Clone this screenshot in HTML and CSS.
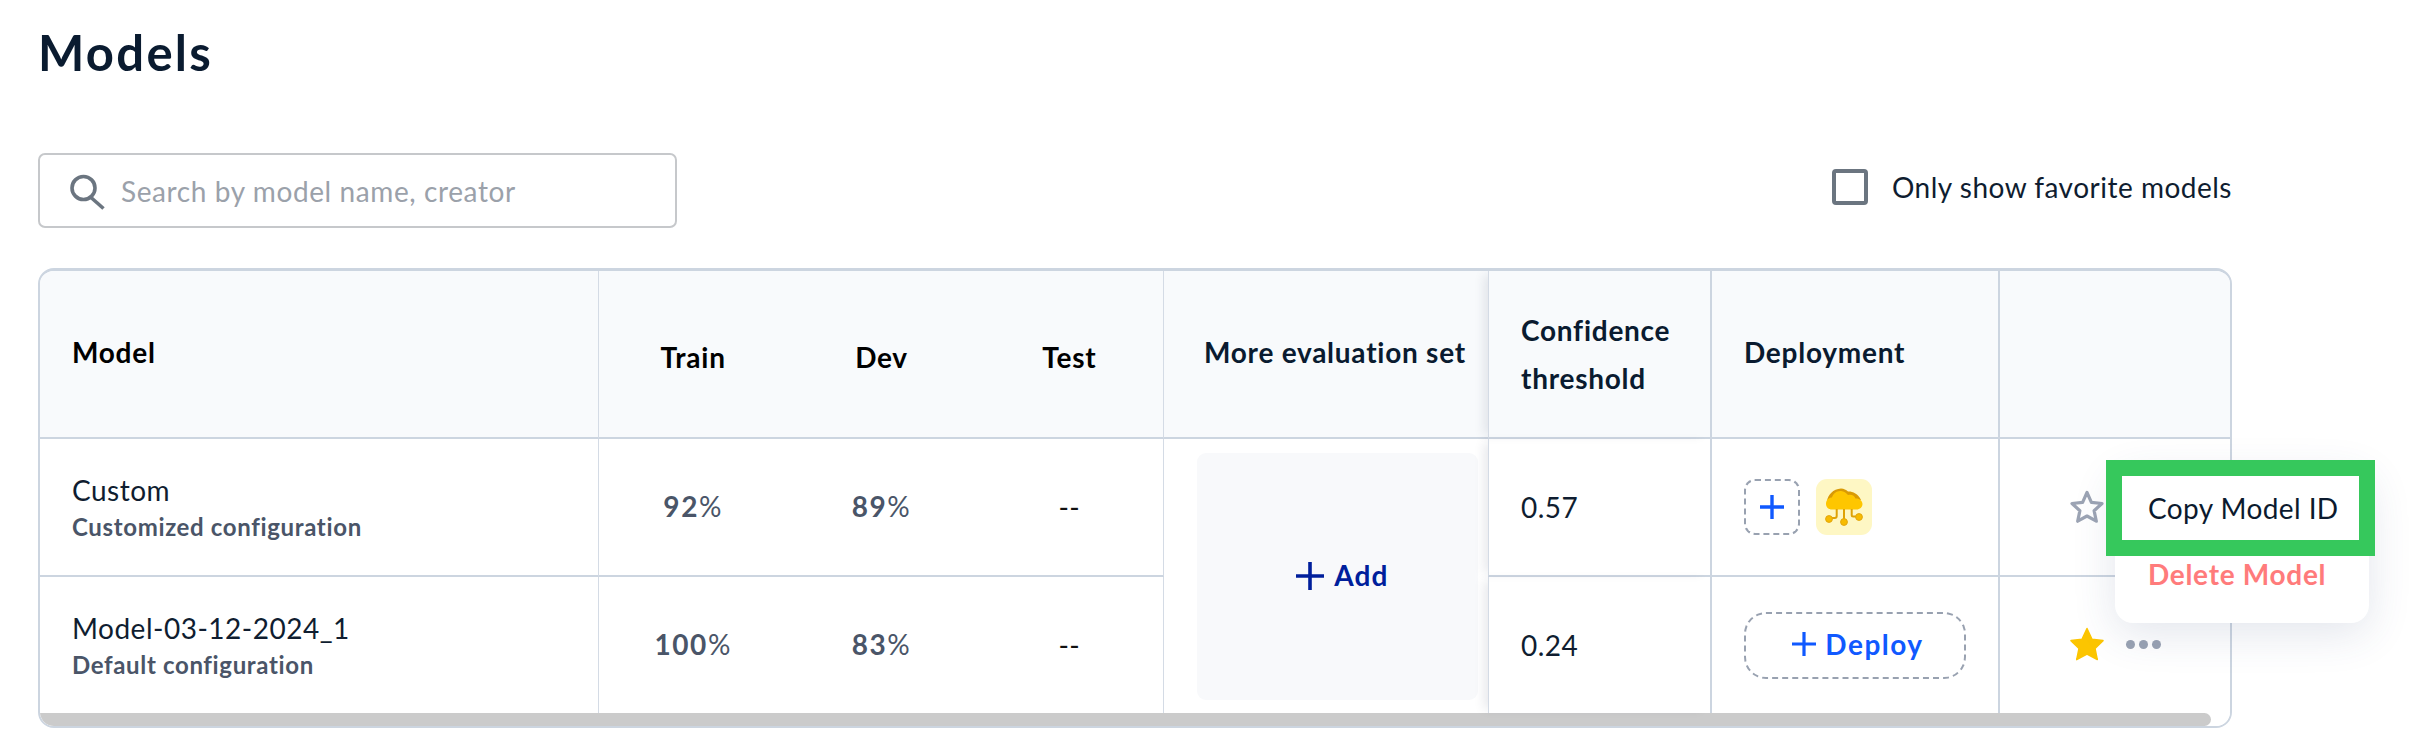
FILE: index.html
```html
<!DOCTYPE html>
<html lang="en">
<head>
<meta charset="utf-8">
<title>Models</title>
<link rel="stylesheet" href="styles.css">
</head>
<body>
<main class="page">
  <h1 class="title">Models</h1>
  <div class="toolbar">
    <label class="search">
      <svg class="search-icon" viewBox="0 0 36 36" width="36" height="36"><circle cx="14.5" cy="14" r="11.5" fill="none" stroke="#6b7580" stroke-width="3.6"/><path d="M22 23.5 34.5 34.5" fill="none" stroke="#6b7580" stroke-width="3.6"/></svg>
      <input class="search-input" type="text" placeholder="Search by model name, creator">
    </label>
    <label class="filter"><span class="checkbox"></span><span>Only show favorite models</span></label>
  </div>
  <div class="table-area">
    <div class="table-frame">
      <table class="models">
        <colgroup>
          <col class="c-model"><col class="c-num"><col class="c-num"><col class="c-num"><col class="c-more"><col class="c-conf"><col class="c-dep"><col class="c-act">
        </colgroup>
        <thead>
          <tr>
            <th class="lead line">Model</th>
            <th class="metric"><span>Train</span></th>
            <th class="metric"><span>Dev</span></th>
            <th class="metric line"><span>Test</span></th>
            <th class="more">More evaluation set</th>
            <th class="conf strong">Confidence threshold</th>
            <th class="dep strong">Deployment</th>
            <th></th>
          </tr>
        </thead>
        <tbody>
          <tr class="first">
            <td class="lead line"><div class="name">Custom</div><div class="config">Customized configuration</div></td>
            <td class="metric"><b>92</b>%</td>
            <td class="metric"><b>89</b>%</td>
            <td class="metric line dash">--</td>
            <td class="more-cell" rowspan="2"><button class="add" type="button"><svg viewBox="0 0 28 28" width="28" height="28"><path d="M14 0v28M0 14h28" stroke="#001f9c" stroke-width="3.6" fill="none"/></svg><span>Add</span></button></td>
            <td class="conf strong">0.57</td>
            <td class="dep strong">
              <div class="dep-row">
                <button class="plus-box" type="button"><svg viewBox="0 0 24 24" width="24" height="24"><path d="M12 0v24M0 12h24" stroke="#1059ff" stroke-width="3.4" fill="none"/></svg></button>
                <span class="cloud">
                  <svg viewBox="0 0 56 56" width="56" height="56">
                    <path d="M11 22C12 16 17 10 25 9.500c3 .2 5 1.300 7 3 4-.3 10 1.800 13 8.500Z" fill="#d99a05"/>
                    <path d="M16 30.500C12 30.500 9.800 27.500 10 24.500 10.200 21 13 18.500 16 18.500 17 14.500 21 11.500 25 12c3 .2 5 2 7 4 3.500-1 6.500 .5 7.500 3.500 4-.3 7 2.500 7 5.500 0 3-2.500 5.500-6 5.500Z" fill="#fec600"/>
                    <path d="M20.700 30v7c0 1.500-1 2-2 2H16M28 30v10M35.700 30v6c0 1 .5 1.500 1.500 1.500H40" fill="none" stroke="#dea207" stroke-width="2"/>
                    <circle cx="13" cy="40" r="3.400" fill="#f7bb00" stroke="#e3a60c"/><circle cx="28" cy="43" r="3.400" fill="#f7bb00" stroke="#e3a60c"/><circle cx="43" cy="38" r="3.400" fill="#f7bb00" stroke="#e3a60c"/>
                  </svg>
                </span>
              </div>
            </td>
            <td class="act">
              <svg class="star" viewBox="0 0 36 36" width="36" height="36"><path d="M18 3.500l4.400 9.800 10.600 1.200-7.900 7.200 2.200 10.500L18 27l-9.300 5.200 2.200-10.500L3 14.500l10.600-1.200Z" fill="none" stroke="#9ca4b4" stroke-width="3.200" stroke-linejoin="round"/></svg>
            </td>
          </tr>
          <tr class="second">
            <td class="lead line"><div class="name">Model-03-12-2024_1</div><div class="config">Default configuration</div></td>
            <td class="metric"><b>100</b>%</td>
            <td class="metric"><b>83</b>%</td>
            <td class="metric line dash">--</td>
            <td class="conf strong">0.24</td>
            <td class="dep strong">
              <button class="deploy" type="button"><svg viewBox="0 0 24 24" width="24" height="24"><path d="M12 0v24M0 12h24" stroke="#1059ff" stroke-width="3.2" fill="none"/></svg><span>Deploy</span></button>
            </td>
            <td class="act">
              <div class="act-row">
                <svg class="star" viewBox="0 0 36 36" width="36" height="36"><path d="M18 1.500l5 10.800 11 1.300-8 7.800 2.300 11.200L18 27l-10.300 5.600L10 21.400l-8-7.800 11-1.300Z" fill="#fcc500" stroke="#fcc500" stroke-width="1.500" stroke-linejoin="round"/></svg>
                <span class="dots"><i></i><i></i><i></i></span>
              </div>
            </td>
          </tr>
        </tbody>
      </table>
      <div class="scroll-track"><div class="scroll-thumb"></div></div>
    </div>
    <div class="menu">
      <div class="menu-item copy">Copy Model ID</div>
      <div class="menu-item delete">Delete Model</div>
    </div>
  </div>
</main>
</body>
</html>
```
FILE: styles.css
```css
* { box-sizing: border-box; }
html, body { margin: 0; background: #fff; }
body { font-family: "Lato", "Noto Sans", sans-serif; color: #0b1a2e; letter-spacing: .5px; }
.page { width: 2433px; height: 756px; padding: 20px 0 0 38px; overflow: hidden; }
.title { margin: 0; font-size: 49px; line-height: 64px; font-weight: 700; letter-spacing: 2.3px; color: #0a1b30; }
.toolbar { display: flex; justify-content: space-between; align-items: flex-start; width: 2194px; margin-top: 69px; }
.search { display: flex; align-items: center; gap: 16px; width: 639px; height: 75px; padding: 0 30px 0 29px; border: 2px solid #c6c8cb; border-radius: 7px; }
.search-icon { flex: none; margin-top: 2px; }
.search-input { flex: 1; min-width: 0; border: 0; outline: 0; padding: 0; font: 400 28px "Lato", sans-serif; letter-spacing: .6px; color: #0b1a2e; background: transparent; }
.search-input::placeholder { color: #9ba1aa; opacity: 1; }
.filter { display: flex; align-items: center; gap: 24px; margin-top: 16px; font-size: 28px; line-height: 36px; color: #0f1d30; }
.checkbox { width: 36px; height: 36px; border: 4px solid #6b7580; border-radius: 4px; }
.table-area { position: relative; width: 2194px; margin-top: 40px; }
.table-frame { width: 2194px; border: 2px solid #ccd5e0; border-top-width: 3px; border-radius: 16px; overflow: hidden; background: #fff; }
.models { width: 2190px; table-layout: fixed; border-collapse: separate; border-spacing: 0; }
.c-model { width: 559px; }
.c-num { width: 188.33px; }
.c-more { width: 324px; }
.c-conf { width: 224px; }
.c-dep { width: 288px; }
.c-act { width: 230px; }
th, td { padding: 0; text-align: left; vertical-align: middle; }
thead th { height: 168px; background: #f8fafc; border-bottom: 2px solid #ccd5e0; font-size: 28px; letter-spacing: .75px; line-height: 48px; font-weight: 700; color: #0a1b30; }
tbody td { font-size: 28px; color: #0f1d30; }
.first td { height: 138px; border-bottom: 2px solid #ccd5e0; }
.first .more-cell { border-bottom: 0; }
.second td { height: 136px; }
.line { border-right: 1px solid #d4dbe5; }
.lead { padding-left: 32px; }
thead .lead { padding-bottom: 4px; color: #000; }
thead .metric { text-align: center; padding-top: 6px; color: #000; }
.metric { text-align: center; color: #4a5568; }
tbody .metric { color: #4a5568; font-size: 28px; letter-spacing: 1.6px; padding-bottom: 2px; }
tbody .metric.dash { color: #111; letter-spacing: .5px; padding-bottom: 0; }
.metric b { font-weight: 700; }
.more { padding: 0 0 4px 40px; white-space: nowrap; }
.conf { position: relative; padding-left: 32px; box-shadow: -8px 0 10px -4px rgba(30, 40, 70, .10); border-left: 1px solid #d4dbe5; }
thead .conf { padding-right: 30px; }
.strong { border-right: 2px solid #ccd5e0; }
.dep { padding-left: 32px; }
thead .dep { padding-bottom: 4px; }
.name { font-size: 28px; line-height: 36px; color: #0f1d30; padding-top: 1px; }
.config { font-size: 24px; line-height: 34px; font-weight: 700; letter-spacing: .65px; color: #4a5568; margin-top: 2px; }
.more-cell { padding: 14px 10px 13px 33px; }
.add { display: flex; align-items: center; justify-content: center; gap: 10px; width: 100%; height: 247px; border: 0; border-radius: 9px; background: #f8f9fb; font: 700 28px "Lato", sans-serif; letter-spacing: 1.1px; color: #001f9c; padding: 0 0 4px 10px; }
.add svg { margin-top: 2px; }
.dep-row { display: flex; gap: 16px; }
.plus-box { display: flex; align-items: center; justify-content: center; width: 56px; height: 56px; padding: 0; border: 2px dashed #98a1b0; border-radius: 11px; background: #fff; }
.cloud { display: block; width: 56px; height: 56px; border-radius: 11px; background: #fef7c4; }
.cloud svg { display: block; }
.deploy { display: flex; align-items: center; justify-content: center; gap: 9px; width: 222px; height: 67px; padding: 0 0 2px 6px; border: 2px dashed #98a1b0; border-radius: 22px; background: #fff; font: 700 28px "Lato", sans-serif; letter-spacing: 1.5px; color: #1059ff; }
.act { padding-left: 69px; }
.act-row { display: flex; align-items: center; gap: 21px; }
.star { display: block; }
.dots { display: flex; gap: 4px; margin-top: -2px; }
.dots i { width: 9px; height: 9px; border-radius: 50%; background: #9aa3b3; }
.menu { position: absolute; left: 2077px; top: 200px; width: 254px; height: 155px; border-radius: 18px; background: #fff; box-shadow: 0 10px 44px rgba(50, 70, 120, .14); }
.menu-item { font-size: 28px; }
.copy { margin: -8px -6px 0 -9px; height: 96px; padding-left: 26px; display: flex; align-items: center; letter-spacing: .4px; border: 16px solid #36c85c; background: #fff; color: #0b1a2e; }
.delete { padding: 0 0 0 33px; line-height: 36px; font-weight: 700; letter-spacing: .7px; color: #ff7b7b; }
.scroll-track { height: 13px; background: #fff; }
.scroll-thumb { width: 2171px; height: 13px; border-radius: 0 7px 7px 0; background: #cbcbcb; }
```
